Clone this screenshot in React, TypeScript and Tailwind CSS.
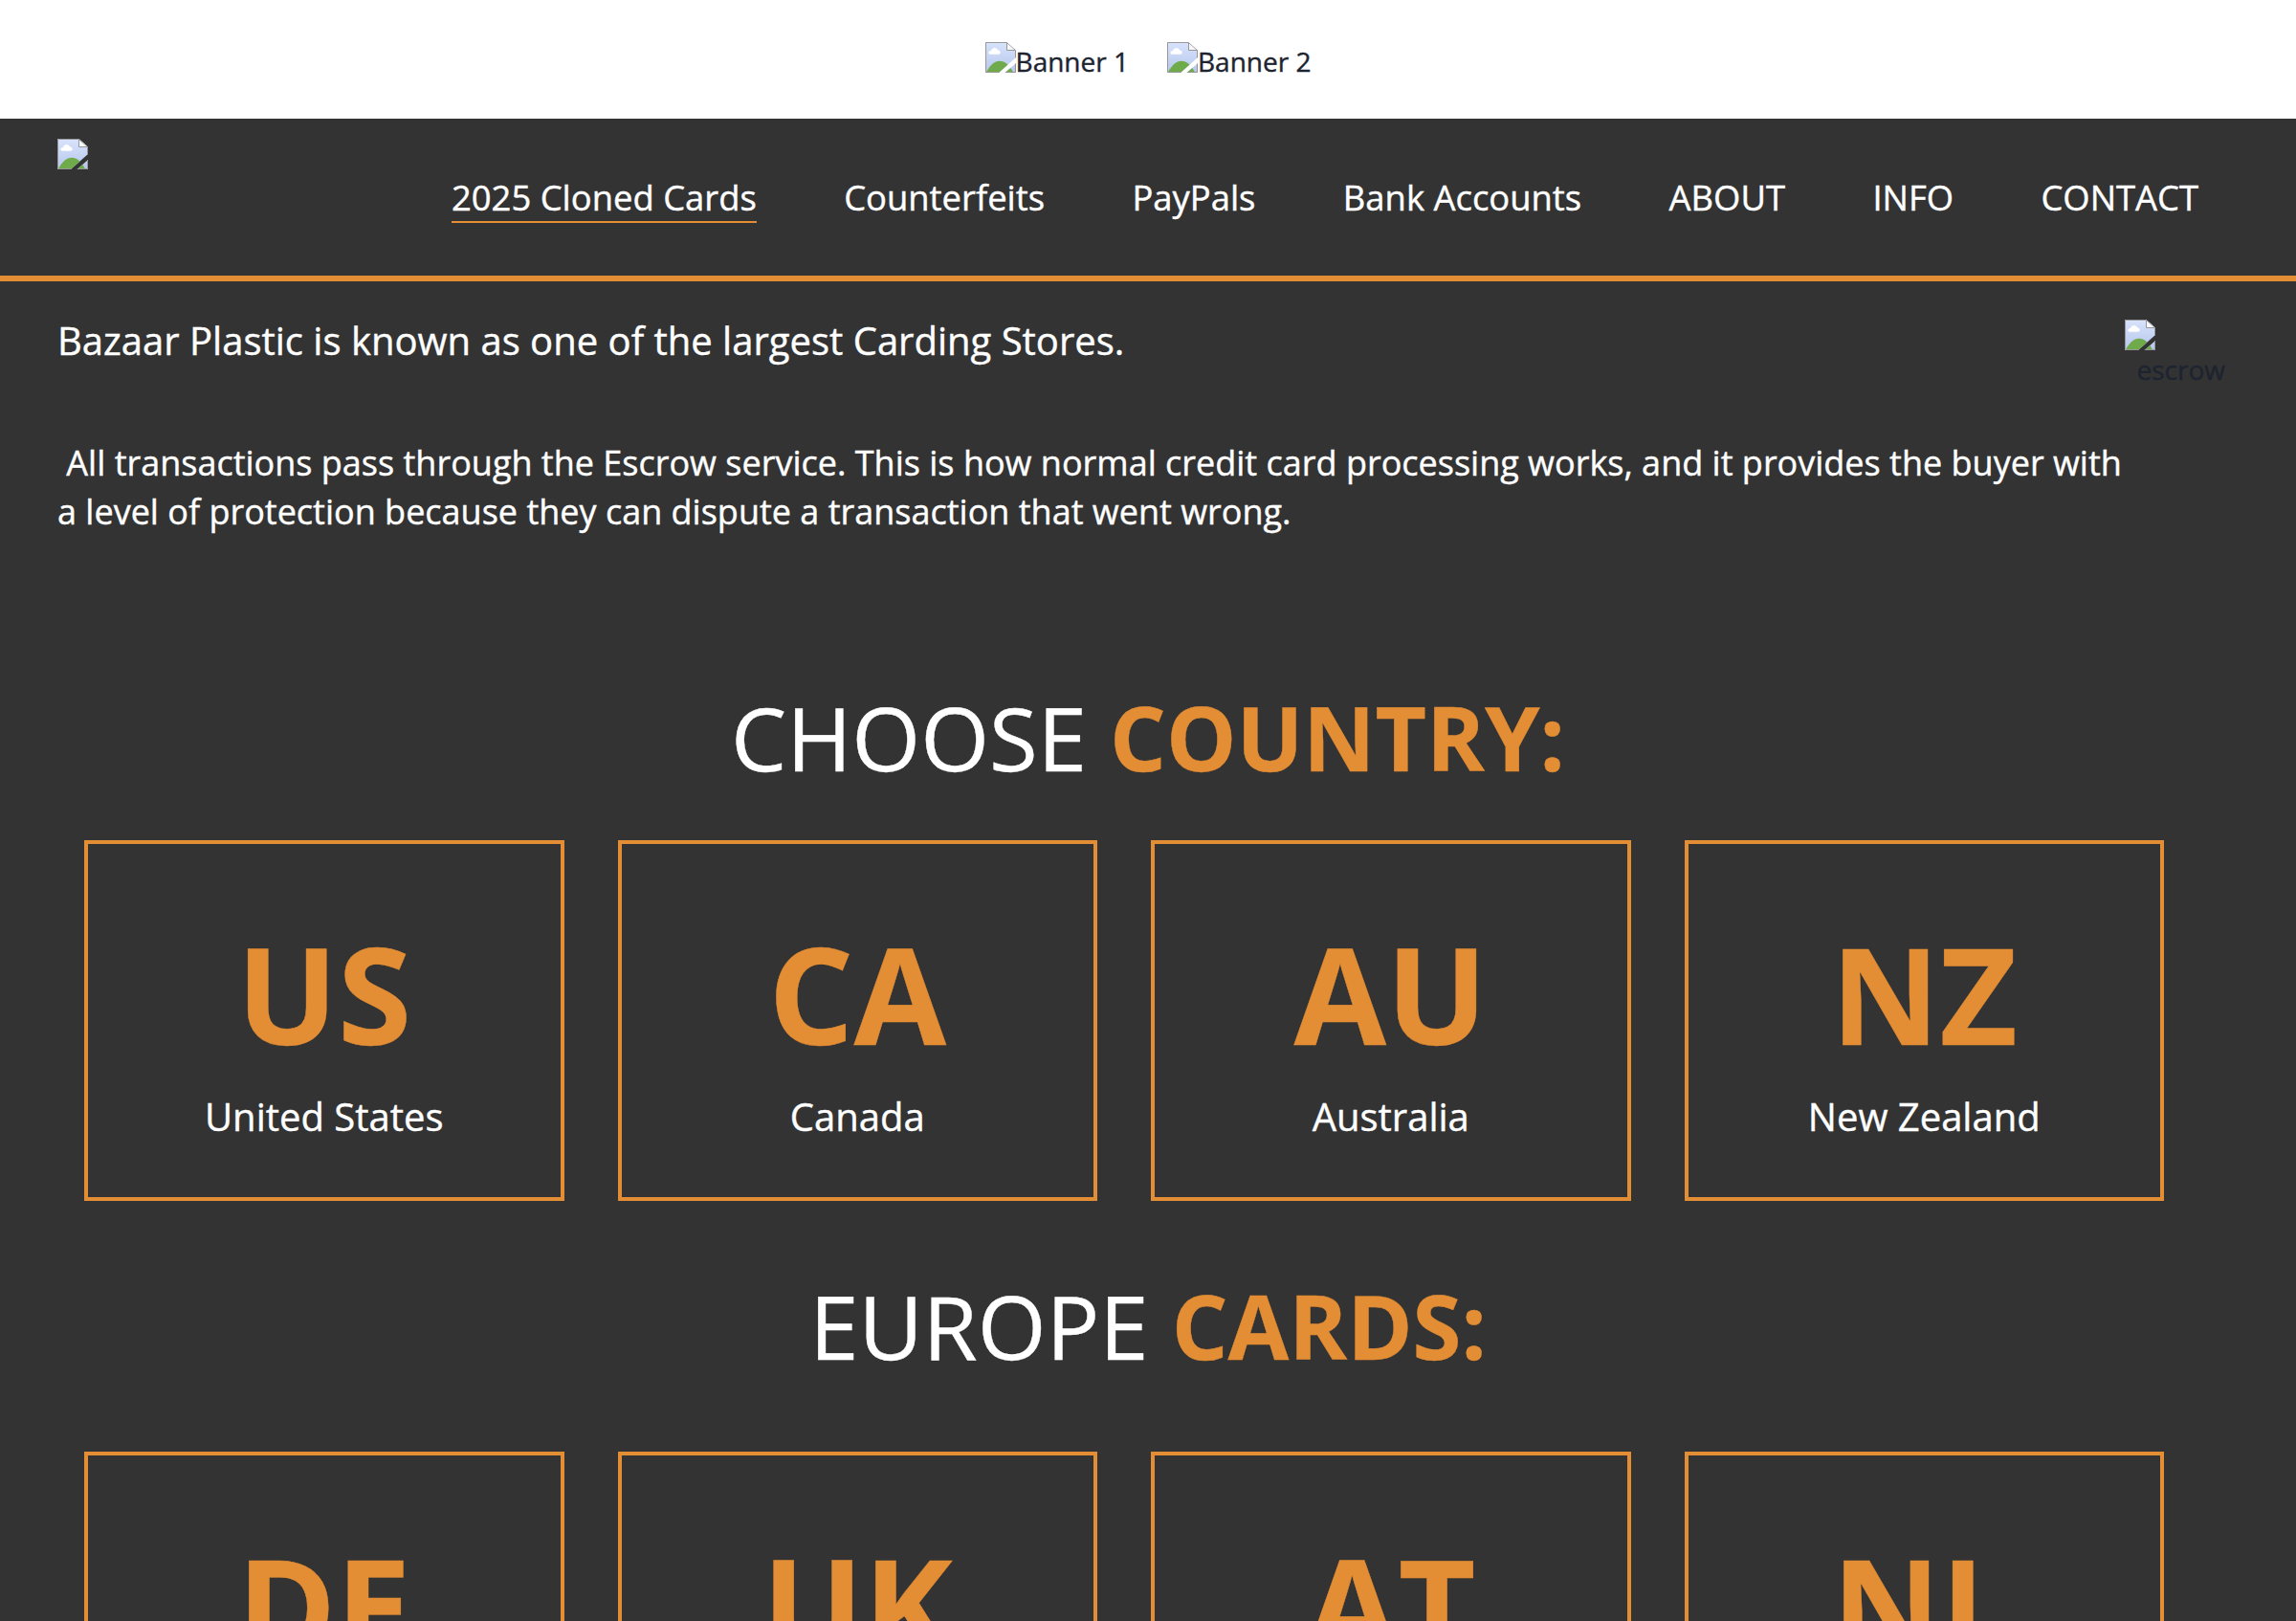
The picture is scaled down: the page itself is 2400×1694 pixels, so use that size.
import { useId } from "react";

const navItems = ["2025 Cloned Cards", "Counterfeits", "PayPals", "Bank Accounts", "ABOUT", "INFO", "CONTACT"];

type Country = { code: string; name?: string };

const world: Country[] = [
  { code: "US", name: "United States" },
  { code: "CA", name: "Canada" },
  { code: "AU", name: "Australia" },
  { code: "NZ", name: "New Zealand" },
];

const europe: Country[] = [{ code: "DE" }, { code: "UK" }, { code: "AT" }, { code: "NL" }];

/* Placeholder for a picture that has not loaded: a torn page with a cloud and a hill. */
function MissingImage() {
  const id = useId();
  return (
    <svg viewBox="0 0 32 32" className="size-8 shrink-0">
      <defs>
        <linearGradient id={`${id}s`} x1="0" y1="0" x2="0" y2="1">
          <stop offset="0" stopColor="#d8e3fc" />
          <stop offset="1" stopColor="#b6c6ec" />
        </linearGradient>
        <clipPath id={`${id}c`}>
          <path d="M0 0H22.5L32 8.5V16L14 32H0ZM32 22V32H20.5Z" />
        </clipPath>
      </defs>
      <g clipPath={`url(#${id}c)`}>
        <rect width="32" height="32" fill={`url(#${id}s)`} />
        <path d="M1 31.500C5 24 9.500 19.800 15 19.800S25 24 29 31.500Z" fill="#6fab4b" />
        <path d="M5.800 12.800C2.600 12.800 2.600 9.200 6 8.900C7 5.200 12 5 13.200 8.600C16.600 9 16.400 12.800 14 12.800Z" fill="#fff" />
        <path d="M22.500 0V8.500H32L22.500 0Z" fill="#f6f8fb" />
        <path d="M22.500 .5V8.500H31.500M22.500 .5L31.500 8.500V31.500H.5V.5Z" fill="none" stroke="#979797" />
      </g>
    </svg>
  );
}

function Banner({ label }: { label: string }) {
  return (
    <div className="flex items-start">
      <MissingImage />
      <span className="text-[28px] leading-[40px]">{label}</span>
    </div>
  );
}

function SectionHeading({ lead, accent }: { lead: string; accent: string }) {
  return (
    <h2 className="text-center text-[92.4px] leading-[110px] text-white">
      {lead} <b className="font-bold text-[#e38d34]">{accent}</b>
    </h2>
  );
}

function CountryGrid({ countries }: { countries: Country[] }) {
  return (
    <div className="mr-[110px] ml-[60px] grid grid-cols-4">
      {countries.map((c) => (
        <div key={c.code} className="mx-7 h-[377px] border-4 border-[#e38d34] pt-[86px] text-center">
          <div className="text-[140px] leading-[140px] font-bold text-[#e38d34]">{c.code}</div>
          {c.name && <div className="mt-[31px] text-[40px] leading-[56px] text-white">{c.name}</div>}
        </div>
      ))}
    </div>
  );
}

export default function App() {
  return (
    <div className="h-[1694px] w-[2400px] overflow-hidden bg-[#333333] font-['Open_Sans',sans-serif] text-[#1d2430] [-webkit-text-stroke:0.4px]">
      <div className="flex h-[124px] justify-center gap-10 bg-white pt-11">
        <Banner label="Banner 1" />
        <Banner label="Banner 2" />
      </div>

      <header className="flex h-[170px] items-start border-b-6 border-[#e38d34] pl-[60px]">
        <div className="w-[412px] pt-[21px]">
          <MissingImage />
        </div>
        <nav className="flex gap-[91.4px] pt-[58px] text-[36.4px] leading-[49px] whitespace-nowrap text-white">
          {navItems.map((item, i) => (
            <a key={item} className={i === 0 ? "border-b-2 border-[#e38d34]" : "border-b-2 border-transparent"}>
              {item}
            </a>
          ))}
        </nav>
      </header>

      <section className="flex h-[421px] justify-between pr-[74px] pl-[60px]">
        <div className="whitespace-nowrap text-white">
          <p className="mt-[34px] text-[40px] leading-[56px]">
            Bazaar Plastic is known as one of the largest Carding Stores.
          </p>
          <p className="mt-[74px] text-[36px] leading-[51px]">
            &nbsp;All transactions pass through the Escrow service. This is how normal credit card processing works, and it
            provides the buyer with
            <br />a level of protection because they can dispute a transaction that went wrong.
          </p>
        </div>
        <div className="pt-10">
          <MissingImage />
          <div className="pl-[13px] text-[28px] leading-[40px]">escrow</div>
        </div>
      </section>

      <SectionHeading lead="CHOOSE" accent="COUNTRY:" />
      <div className="pt-[53px] pb-[75px]">
        <CountryGrid countries={world} />
      </div>

      <SectionHeading lead="EUROPE" accent="CARDS:" />
      <div className="pt-[77px]">
        <CountryGrid countries={europe} />
      </div>
    </div>
  );
}
